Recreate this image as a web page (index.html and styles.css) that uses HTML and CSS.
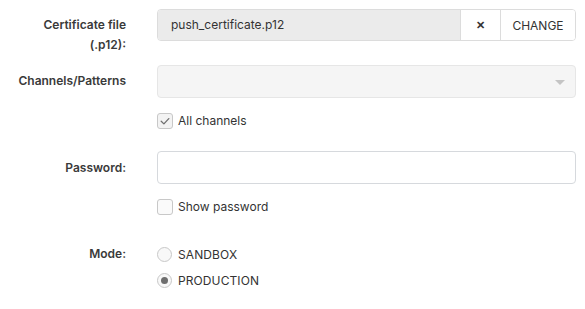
FILE: index.html
```html
<!DOCTYPE html>
<html>
<head>
<meta charset="utf-8">
<link rel="stylesheet" href="styles.css">
</head>
<body>
<form class="form">
  <div class="row row-file">
    <label class="label">Certificate file (.p12):</label>
    <div class="file">
      <div class="file-name">push_certificate.p12</div>
      <button type="button" class="file-btn file-clear">&#x2715;</button>
      <button type="button" class="file-btn file-change">CHANGE</button>
    </div>
  </div>
  <div class="row row-select">
    <label class="label">Channels/Patterns</label>
    <div class="select">
      <span class="caret"></span>
    </div>
  </div>
  <div class="row row-check row-check-channels">
    <span></span>
    <label class="check">
      <span class="box checked">
        <svg viewBox="0 0 16 16" width="16" height="16"><path d="M4.2 8.3 L6.9 10.9 L11.8 5.6" fill="none" stroke="#707070" stroke-width="1.3" stroke-linecap="round" stroke-linejoin="round"/></svg>
      </span>
      <span class="check-text">All channels</span>
    </label>
  </div>
  <div class="row row-password">
    <label class="label">Password:</label>
    <div class="input"></div>
  </div>
  <div class="row row-check row-check-show">
    <span></span>
    <label class="check">
      <span class="box"></span>
      <span class="check-text">Show password</span>
    </label>
  </div>
  <div class="row row-mode">
    <label class="label">Mode:</label>
    <div class="radios">
      <label class="radio"><span class="circle"></span><span class="radio-text">SANDBOX</span></label>
      <label class="radio"><span class="circle checked"></span><span class="radio-text">PRODUCTION</span></label>
    </div>
  </div>
</form>
</body>
</html>
```
FILE: styles.css
```css
* { box-sizing: border-box; }
html, body { margin: 0; padding: 0; background: #fff; }
body {
  font-family: Inter, "Noto Sans", "Liberation Sans", sans-serif;
  font-size: 12px;
  color: #333;
}
.form {
  padding: 9px 9px 0 0;
  display: flex;
  flex-direction: column;
}
.row {
  display: grid;
  grid-template-columns: 126px 1fr;
  column-gap: 31px;
}
.label {
  text-align: right;
  font-weight: 600;
  line-height: 18px;
  color: #3a3a3a;
}
.row-file { height: 32px; }
.row-file .label { padding-top: 6px; padding-left: 14px; line-height: 20px; }
.row-select { margin-top: 24px; }
.row-select .label { padding-top: 7px; }
.row-check-channels { margin-top: 15px; }
.row-password { margin-top: 22px; }
.row-password .label { padding-top: 8px; }
.row-check-show { margin-top: 15px; }
.row-mode { margin-top: 30px; }
.row-mode .label { padding-top: 0; }

.file {
  display: flex;
  height: 32px;
  border: 1px solid #dcdcdc;
  border-radius: 4px;
  overflow: hidden;
}
.file-name {
  flex: 1;
  background: #ebebeb;
  padding-left: 13px;
  line-height: 30px;
  font-size: 12px;
  color: #333;
}
.file-btn {
  background: #fff;
  border: 0;
  border-left: 1px solid #dcdcdc;
  font-family: inherit;
  color: #333;
  padding: 0;
  margin: 0;
}
.file-clear { width: 40px; font-size: 11px; font-weight: 700; }
.file-change { width: 75px; font-size: 12px; }

.select {
  position: relative;
  height: 33px;
  background: #f5f5f5;
  border: 1px solid #e6e6e6;
  border-radius: 4px;
}
.caret {
  position: absolute;
  right: 10px;
  top: 14px;
  width: 0;
  height: 0;
  border-left: 5px solid transparent;
  border-right: 5px solid transparent;
  border-top: 5px solid #c4c4c4;
}

.input {
  height: 33px;
  background: #fff;
  border: 1px solid #d6d9dd;
  border-radius: 4px;
}

.check {
  display: flex;
  align-items: center;
  gap: 5px;
  height: 16px;
}
.box {
  width: 16px;
  height: 16px;
  border: 1px solid #c8c8c8;
  border-radius: 3px;
  background: #fafafa;
  display: block;
}
.box svg { display: block; margin: -1px; }
.box.checked { background: #f3f3f3; }
.check-text { line-height: 16px; color: #333; }

.radios {
  display: flex;
  flex-direction: column;
  gap: 8px;
}
.radio {
  display: flex;
  align-items: center;
  gap: 6px;
  height: 18px;
}
.circle {
  width: 15px;
  height: 15px;
  border: 1px solid #c8c8c8;
  border-radius: 50%;
  background: #f8f8f8;
  display: flex;
  align-items: center;
  justify-content: center;
}
.circle.checked::after {
  content: "";
  width: 7px;
  height: 7px;
  border-radius: 50%;
  background: #6e6e6e;
}
.radio-text { color: #333; letter-spacing: 0.1px; }
```
